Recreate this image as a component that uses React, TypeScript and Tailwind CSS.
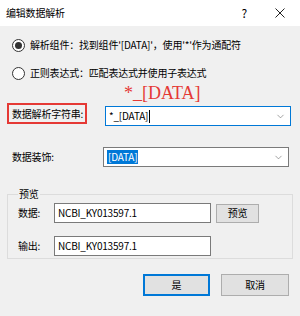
import React from 'react';
import { ChevronDown } from 'lucide-react';

function Radio({ checked, label }: { checked?: boolean; label: string }) {
  return (
    <div className="flex h-[16px] items-center">
      <span className="ml-[12px] flex h-[13px] w-[13px] items-center justify-center rounded-full border border-[#333333] bg-white">
        {checked && <span className="h-[7px] w-[7px] rounded-full bg-[#333333]" />}
      </span>
      <span className="ml-[5px]">{label}</span>
    </div>
  );
}

function Combo({ children, focused }: { children: React.ReactNode; focused?: boolean }) {
  return (
    <div
      className={`flex h-[20px] items-center bg-white pl-[3px] pr-[4px] ${
        focused ? 'border border-[#0078d7]' : 'border border-[#7a7a7a]'
      }`}
    >
      <div className="flex flex-1 items-center">{children}</div>
      <ChevronDown className="h-[11px] w-[11px] text-[#606060]" strokeWidth={1.25} />
    </div>
  );
}

export default function App() {
  return (
    <div className="h-[316px] w-[300px] overflow-hidden whitespace-nowrap bg-[#f0f0f0] font-['Noto_Sans_CJK_SC','Microsoft_YaHei',sans-serif] text-[10px] leading-[14px] tracking-[-0.2px] text-black">
      <div className="flex h-[26px] items-center bg-white pl-[6px]">
        <span>编辑数据解析</span>
        <span className="ml-auto mr-[28px] text-[12px]">?</span>
        <svg className="mr-[15px]" width="10" height="10" viewBox="0 0 10 10">
          <path d="M0.5 0.5 L9.5 9.5 M9.5 0.5 L0.5 9.5" stroke="#222" strokeWidth="1" />
        </svg>
      </div>

      <div className="mt-[11px]">
        <Radio checked label="解析组件：找到组件'[DATA]'，使用'*'作为通配符" />
      </div>
      <div className="mt-[12px]">
        <Radio label="正则表达式：匹配表达式并使用子表达式" />
      </div>

      <div className="ml-[124px] mt-[3px] h-[19px] font-['Liberation_Serif',serif] text-[18px] leading-[19px] tracking-normal text-[#e53935]">
        *_[DATA]
      </div>

      <div className="flex items-start">
        <div className="ml-[7px] flex h-[21px] w-[80px] items-center border-2 border-[#e53935] pl-[3px]">
          数据解析字符串:
        </div>
        <div className="ml-[18px] mt-[3px] w-[186px]">
          <Combo focused>
            <span>*_[DATA]</span>
            <span className="ml-[1px] h-[13px] w-[1px] bg-black" />
          </Combo>
        </div>
      </div>

      <div className="mt-[21px] flex items-center">
        <span className="ml-[12px] w-[91px]">数据装饰:</span>
        <div className="w-[186px]">
          <Combo>
            <span className="bg-[#0078d7] px-[1px] text-white">[DATA]</span>
          </Combo>
        </div>
      </div>

      <fieldset className="mx-[7px] mt-[20px] h-[72px] border border-[#dcdcdc] pl-[10px] pr-0">
        <legend className="px-[1px] leading-[14px]">预览</legend>
        <div className="mt-[2px] flex items-center">
          <span className="w-[36px]">数据:</span>
          <div className="flex h-[20px] w-[157px] items-center border border-[#7a7a7a] bg-white pl-[3px]">
            NCBI_KY013597.1
          </div>
          <button className="ml-[5px] h-[19px] w-[43px] border border-[#adadad] bg-[#e1e1e1]">预览</button>
        </div>
        <div className="mt-[13px] flex items-center">
          <span className="w-[36px]">输出:</span>
          <div className="flex h-[20px] w-[157px] items-center border border-[#7a7a7a] bg-white pl-[3px]">
            NCBI_KY013597.1
          </div>
        </div>
      </fieldset>

      <div className="mt-[15px] flex justify-end pr-[11px]">
        <button className="h-[22px] w-[67px] border-2 border-[#0078d7] bg-[#e1e1e1]">是</button>
        <button className="ml-[11px] h-[22px] w-[68px] border border-[#adadad] bg-[#e1e1e1]">取消</button>
      </div>
    </div>
  );
}
